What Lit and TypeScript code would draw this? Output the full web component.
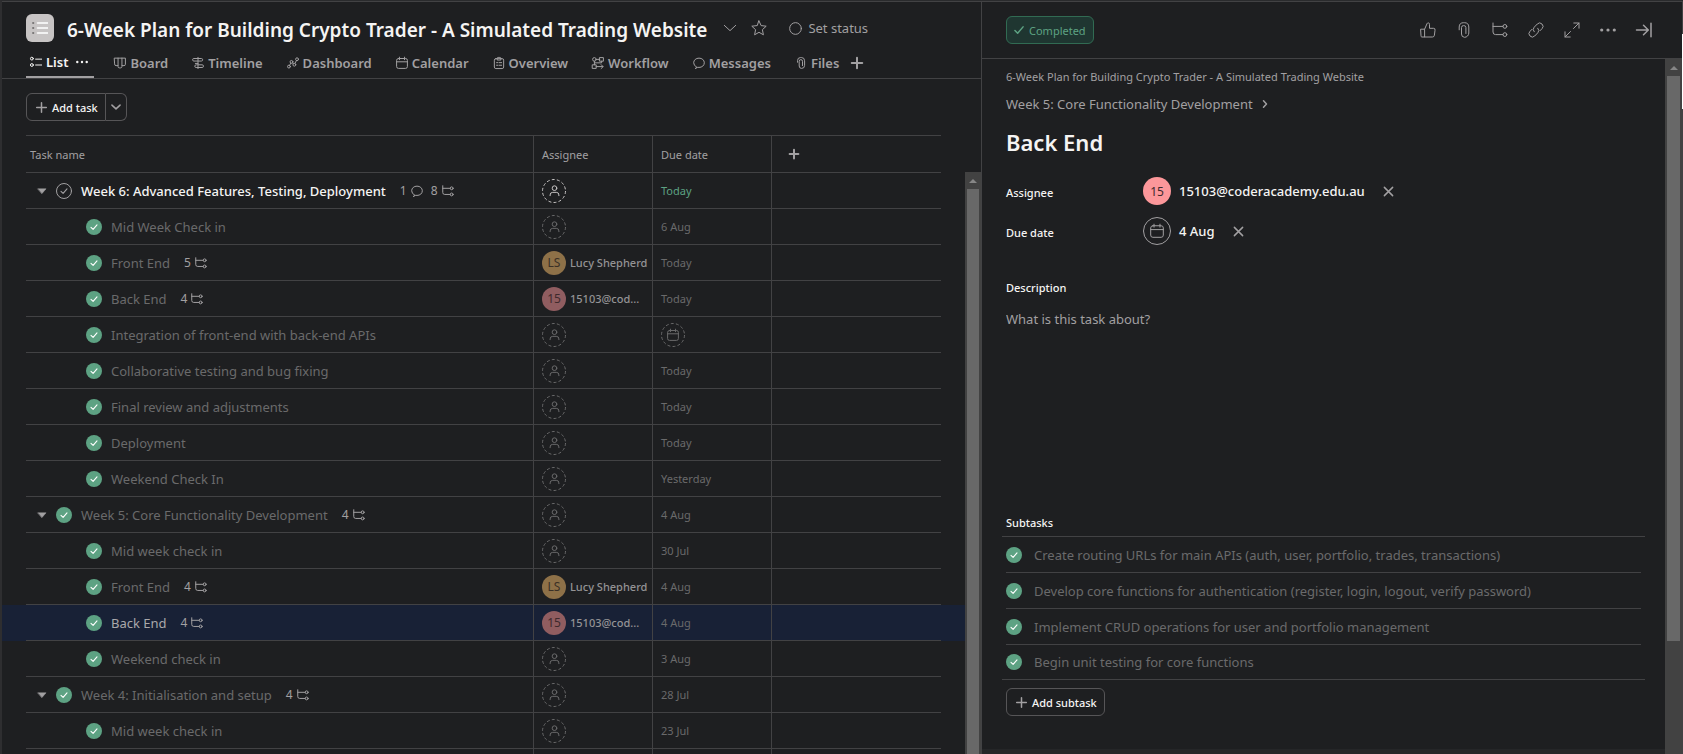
import { LitElement, html, svg, css, nothing, TemplateResult } from "lit";
import { customElement, property } from "lit/decorators.js";
import { classMap } from "lit/directives/class-map.js";

interface Task {
  name: string;
  parent?: boolean;
  open?: boolean;
  selected?: boolean;
  comments?: number;
  subtasks?: number;
  who?: "ls" | "15";
  due: string;
  today?: boolean;
}

const TASKS: Task[] = [
  { name: "Week 6: Advanced Features, Testing, Deployment", parent: true, open: true, comments: 1, subtasks: 8, due: "Today", today: true },
  { name: "Mid Week Check in", due: "6 Aug" },
  { name: "Front End", subtasks: 5, who: "ls", due: "Today" },
  { name: "Back End", subtasks: 4, who: "15", due: "Today" },
  { name: "Integration of front-end with back-end APIs", due: "" },
  { name: "Collaborative testing and bug fixing", due: "Today" },
  { name: "Final review and adjustments", due: "Today" },
  { name: "Deployment", due: "Today" },
  { name: "Weekend Check In", due: "Yesterday" },
  { name: "Week 5: Core Functionality Development", parent: true, subtasks: 4, due: "4 Aug" },
  { name: "Mid week check in", due: "30 Jul" },
  { name: "Front End", subtasks: 4, who: "ls", due: "4 Aug" },
  { name: "Back End", subtasks: 4, who: "15", due: "4 Aug", selected: true },
  { name: "Weekend check in", due: "3 Aug" },
  { name: "Week 4: Initialisation and setup", parent: true, subtasks: 4, due: "28 Jul" },
  { name: "Mid week check in", due: "23 Jul" },
];

const TABS: [string, string][] = [
  ["list", "List"],
  ["board", "Board"],
  ["timeline", "Timeline"],
  ["dashboard", "Dashboard"],
  ["calendar", "Calendar"],
  ["overview", "Overview"],
  ["workflow", "Workflow"],
  ["bubble", "Messages"],
  ["clip", "Files"],
];

const SUBTASKS = [
  "Create routing URLs for main APIs (auth, user, portfolio, trades, transactions)",
  "Develop core functions for authentication (register, login, logout, verify password)",
  "Implement CRUD operations for user and portfolio management",
  "Begin unit testing for core functions",
];

const ASSIGNEES = {
  ls: { initials: "LS", name: "Lucy Shepherd" },
  "15": { initials: "15", name: "15103@cod..." },
};

/* Glyphs are drawn on a 16-unit grid and stroked with the current colour. */
const GLYPHS: Record<string, TemplateResult> = {
  list: svg`<circle cx="2.5" cy="3.5" r="1.9"/><circle cx="2.5" cy="12" r="1.9"/><path d="M7.5 4.2h8M7.5 12h8"/>`,
  board: svg`<path d="M.8 1.5h14.4v8.2a1.8 1.8 0 0 1-1.8 1.8h-2.8v1.2a1.8 1.8 0 0 1-1.8 1.8H7.2a1.8 1.8 0 0 1-1.8-1.8v-1.2H2.600a1.800 1.800 0 0 1-1.800-1.800zM5.400 1.500v10M10.600 1.500v10"/>`,
  timeline: svg`<path d="M8 .5v15M8 2H2.500a1.700 1.700 0 0 0 0 3.400H12.500a1.500 1.500 0 0 0 0-3.400H8M4.500 8.600H8M8 10.400h5.500a1.800 1.800 0 0 1 0 3.600H5.500a1.800 1.800 0 0 1 0-3.600z"/>`,
  dashboard: svg`<circle cx="2.600" cy="12.800" r="1.900"/><circle cx="6" cy="6.500" r="1.900"/><circle cx="9.800" cy="10.300" r="1.900"/><circle cx="13.400" cy="3" r="1.900"/><path d="M3.500 11l1.600-2.800M7.300 8l1.200 1M10.600 8.500l2-3.700"/>`,
  calendar: svg`<rect x=".8" y="2" width="14.400" height="13.200" rx="2.500"/><path d="M.8 6.400h14.400M4.600 .2v3.400M11.400 .2v3.400"/>`,
  overview: svg`<rect x="1.800" y="2.200" width="12.400" height="13.200" rx="2"/><path d="M5.500 3.500v-1.500a1.400 1.400 0 0 1 1.400-1.400h2.200a1.400 1.400 0 0 1 1.400 1.400v1.500z"/><path d="M4.800 7.500h1.400M8 7.500h3.500M4.800 11h1.400M8 11h3.500"/>`,
  workflow: svg`<circle cx="3.200" cy="3.200" r="2.400"/><rect x="10.400" y=".8" width="4.800" height="4.800"/><rect x=".8" y="10.400" width="4.800" height="4.800"/><path d="M5.600 3.200h4.800M3.200 5.600v4.800M12.800 5.600v2.200H3.200M5.600 12.800h9M12.200 10.200l2.600 2.600-2.600 2.600"/>`,
  bubble: svg`<path d="M4.600 13.300A6.300 6.300 0 0 1 .9 7.700C.9 4.100 4 1.500 8 1.500s7.100 2.600 7.100 6.200S12 13.900 8 13.900c-.6 0-1.100 0-1.600-.2L3.400 15.200z"/>`,
  clip: svg`<path d="M3.400 7V4.800A4.100 4.100 0 0 1 7.500.7h1A4.300 4.300 0 0 1 12.800 5v6.200a4 4 0 0 1-4 4A3.200 3.200 0 0 1 5.600 12V5.700a2.200 2.200 0 0 1 4.400 0v5.800"/>`,
  attach: svg`<path d="M3.200 7.800V5A4.400 4.400 0 0 1 7.600.7h.8A4.400 4.400 0 0 1 12.800 5v6a4.300 4.300 0 0 1-4.300 4.300A3.300 3.300 0 0 1 5.500 12V5.600a2 2 0 0 1 2-2h.4a2 2 0 0 1 2 2V11.500"/>`,
  subtask: svg`<path d="M1 1v9a2.600 2.600 0 0 0 2.600 2.600h7.200M1 4.400h9.800"/><circle cx="12.900" cy="4.400" r="1.900"/><circle cx="12.900" cy="12.600" r="1.900"/>`,
  like: svg`<path d="M1 7.200h3.600v7.800H1.800a.8.8 0 0 1-.8-.8zM4.600 7.200L7 1.700a1.300 1.300 0 0 1 2.500.6v4h4a1.600 1.600 0 0 1 1.500 2l-.6 4.900a2 2 0 0 1-2 1.800H4.600"/>`,
  link: svg`<path d="M6.200 9.800a3.300 3.300 0 0 1 0-4.600l3.100-3.200a3.300 3.300 0 0 1 4.700 4.700l-2 2M9.800 6.200a3.300 3.300 0 0 1 0 4.600l-3.100 3.200A3.300 3.300 0 0 1 2 9.300l2-2"/>`,
  expand: svg`<path d="M9.500 6.500L15 1M9.800 1H15v5.200M6.500 9.500L1 15M6.200 15H1V9.800"/>`,
  collapse: svg`<path d="M.5 8h11.500M7.500 3.200L12.300 8l-4.800 4.800M15 1.200v13.600"/>`,
  star: svg`<path d="M8 .9l2.100 4.700 5.100.6-3.800 3.500 1 5.100L8 12.300l-4.400 2.500 1-5.100L.8 6.200l5.100-.6z"/>`,
  down: svg`<path d="M1.500 5l6.500 6 6.500-6"/>`,
  right: svg`<path d="M5 1.500L11 8l-6 6.500"/>`,
  plus: svg`<path d="M8 1v14M1 8h14"/>`,
  close: svg`<path d="M2 2l12 12M14 2L2 14"/>`,
  ring: svg`<circle cx="8" cy="8" r="7.200"/>`,
  tick: svg`<path d="M1.500 8.800l4.300 4.400L14.500 3"/>`,
  person: svg`<circle cx="8" cy="4.600" r="3.400"/><path d="M1.600 15.500v-1a3.800 3.800 0 0 1 3.800-3.800h5.200a3.800 3.800 0 0 1 3.800 3.800v1"/>`,
  dots: svg`<g fill="currentColor" stroke="none"><circle cx="1.700" cy="8" r="1.600"/><circle cx="8" cy="8" r="1.600"/><circle cx="14.300" cy="8" r="1.600"/></g>`,
  caret: svg`<path d="M1.500 4.500h13L8 12z" fill="currentColor" stroke="currentColor"/>`,
};

@customElement("ui-icon")
class UiIcon extends LitElement {
  @property() name = "plus";
  @property({ type: Number }) size = 12;
  @property({ type: Number }) weight = 1;

  static styles = css`
    :host { display: inline-flex; flex: none; }
    svg { display: block; fill: none; stroke: currentColor; stroke-linecap: round; stroke-linejoin: round; overflow: visible; }
  `;

  render() {
    return html`<svg width=${this.size} height=${this.size} viewBox="0 0 16 16"
      stroke-width=${(this.weight * 16) / this.size} aria-hidden="true">${GLYPHS[this.name]}</svg>`;
  }
}

@customElement("check-mark")
class CheckMark extends LitElement {
  @property({ type: Boolean }) open = false;
  @property() label = "";

  static styles = css`
    :host { display: inline-flex; flex: none; }
    button { display: block; padding: 0; border: 0; background: none; color: #a2a0a2; }
    svg { display: block; }
  `;

  render() {
    return html`<button aria-label=${`Completion of ${this.label}`} aria-pressed=${!this.open}>
      <svg width="16" height="16" viewBox="0 0 16 16" fill="none" stroke-linecap="round" stroke-linejoin="round">
        <circle cx="8" cy="8" r=${this.open ? 7.5 : 8} fill=${this.open ? "none" : "#5da283"} stroke=${this.open ? "currentColor" : "none"} />
        <path d="M5 8.400l2.100 2 3.900-4.500" stroke=${this.open ? "currentColor" : "#ffffff"} stroke-width="1.100" />
      </svg>
    </button>`;
  }
}

@customElement("empty-slot")
class EmptySlot extends LitElement {
  @property() icon = "person";
  @property() label = "";

  static styles = css`
    :host { display: flex; flex: none; }
    button { display: grid; place-items: center; width: 24px; height: 24px; padding: 0; border: 0; background: none; color: inherit; }
    .ring, ui-icon { grid-area: 1 / 1; }
    .ring { display: block; fill: none; stroke: currentColor; }
  `;

  render() {
    return html`<button aria-label=${this.label}>
      <svg class="ring" width="24" height="24" viewBox="0 0 24 24"><circle cx="12" cy="12" r="11.500" stroke-dasharray="3 2.160" /></svg>
      <ui-icon name=${this.icon} size=${this.icon === "person" ? 11 : 12}></ui-icon>
    </button>`;
  }
}

@customElement("scroll-rail")
class ScrollRail extends LitElement {
  @property() extent = "full";

  static styles = css`
    :host { display: flex; flex-direction: column; background: #424242; box-sizing: border-box; padding: 0 2px; }
    .arrow { height: 17px; display: grid; place-items: center; flex: none; }
    .arrow svg { display: block; fill: #868686; }
    .thumb { background: #686868; flex: 1; }
    .rest { flex: 0; }
    .part .thumb { flex: 5; }
    .part .rest { flex: 1; }
    .track { flex: 1; display: flex; flex-direction: column; }
  `;

  render() {
    return html`
      <div class="arrow"><svg width="8" height="4" viewBox="0 0 8 4"><path d="M4 0l4 4H0z" /></svg></div>
      <div class="track ${this.extent}"><div class="thumb"></div><div class="rest"></div></div>
    `;
  }
}

const shared = css`
  * { box-sizing: border-box; }
  button { font: inherit; color: inherit; background: none; border: 0; padding: 0; margin: 0; display: inline-flex; align-items: center; }
  h1, h2, h3, p, ul, dl, dd { margin: 0; padding: 0; }
  ul { list-style: none; }
  a { color: inherit; text-decoration: none; }
  .outlined { height: 28px; border: 1px solid #565557; border-radius: 6px; color: #f5f4f3; font-size: 11px; font-weight: 500; }
  .outlined ui-icon { color: #a2a0a2; }
`;

@customElement("project-list")
class ProjectList extends LitElement {
  static styles = [
    shared,
    css`
      :host { display: flex; flex-direction: column; min-width: 0; overflow: hidden; }
      .title { display: flex; align-items: center; height: 28px; margin: 12px 24px 0; color: #a2a0a2; }
      .badge { width: 28px; height: 28px; border-radius: 6px; background: #c7c4c4; display: grid; place-items: center; flex: none; }
      .badge svg { display: block; }
      h1 { margin-left: 13px; padding-top: 3px; font-size: 19px; line-height: 28px; font-weight: 600; color: #f5f4f3; white-space: nowrap; }
      .title .chev { margin-left: 16px; }
      .title .star { margin-left: 14px; }
      .status { margin-left: 22px; gap: 6px; font-size: 13px; white-space: nowrap; }
      nav { display: flex; align-items: stretch; gap: 24px; height: 37px; padding: 0 24px; border-bottom: 1px solid #424244; color: #a2a0a2; font-size: 13px; font-weight: 600; }
      nav a { display: flex; align-items: center; gap: 4px; padding-top: 6px; white-space: nowrap; }
      .current { color: #f5f4f3; padding: 6px 6px 0 4px; margin-right: -4px; border-bottom: 2px solid #a2a0a2; }
      .current .more { margin-left: 4px; }
      .add-tab { padding-top: 6px; margin-left: -12px; }
      .toolbar { display: flex; padding: 14px 24px; }
      .toolbar .add { padding: 0 7px 0 9px; gap: 5px; border-radius: 6px 0 0 6px; }
      .toolbar .drop { padding: 0 5px; border-left: 0; border-radius: 0 6px 6px 0; }
      .body { flex: 1; min-height: 0; display: flex; }
      .grid { flex: 1; min-width: 0; overflow: hidden; }
      scroll-rail { width: 16px; margin-top: 37px; }
      table { width: 100%; table-layout: fixed; border-collapse: separate; border-spacing: 0; font-size: 11px; color: #6a6a6b; }
      .edge { width: 24px; border: 0; }
      .c-person, .c-date { width: 119px; }
      .c-add { width: 170px; }
      th, td { padding: 0; text-align: left; font-weight: 400; border-bottom: 1px solid #424244; height: 36px; white-space: nowrap; }
      th { height: 38px; border-top: 1px solid #424244; color: #a2a0a2; }
      .split { border-left: 1px solid #424244; padding-left: 8px; }
      th.split.plus { padding-left: 17px; }
      th:nth-child(2) { padding-left: 4px; }
      .name { display: flex; align-items: center; gap: 9px; padding-left: 60px; font-size: 13px; }
      .name.parent { padding-left: 11px; }
      .name.parent button.twist { color: #a2a0a2; }
      .counts { display: flex; align-items: center; gap: 8px; margin-left: 5px; color: #a2a0a2; font-size: 12px; }
      .count { display: flex; align-items: center; gap: 4px; }
      .open .name { color: #f5f4f3; font-weight: 500; }
      .open .counts { font-weight: 400; }
      .open .slot { color: #c7c4c4; }
      .today { color: #5da283; }
      .selected td, .selected .edge { background: #182136; }
      .selected .name { color: #a9a8ab; }
      .person { display: flex; align-items: center; gap: 4px; color: #949395; font-weight: 500; }
      .face { width: 24px; height: 24px; border-radius: 50%; display: grid; place-items: center; flex: none; font-size: 12px; font-weight: 400; color: #3a3026; }
      .face.ls { background: #8e7148; }
      .face.n15 { background: #905d60; color: #3f2a2d; }
    `,
  ];

  row(t: Task) {
    const who = t.who && ASSIGNEES[t.who];
    return html`<tr class=${classMap({ open: !!t.open, selected: !!t.selected })}>
      <td class="edge"></td>
      <td>
        <div class=${classMap({ name: true, parent: !!t.parent })}>
          ${t.parent ? html`<button class="twist" aria-label="Toggle subtasks"><ui-icon name="caret" size="10" weight="0.5"></ui-icon></button>` : nothing}
          <check-mark ?open=${!!t.open} label=${t.name}></check-mark>
          <span>${t.name}</span>
          ${t.subtasks
            ? html`<div class="counts">
                ${t.comments ? html`<span class="count">${t.comments}<ui-icon name="bubble"></ui-icon></span>` : nothing}
                <span class="count">${t.subtasks}<ui-icon name="subtask"></ui-icon></span>
              </div>`
            : nothing}
        </div>
      </td>
      <td class="split slot">
        ${who
          ? html`<div class="person"><span class="face ${t.who === "ls" ? "ls" : "n15"}">${who.initials}</span><span>${who.name}</span></div>`
          : html`<empty-slot label="Assign task"></empty-slot>`}
      </td>
      <td class="split">${t.due ? html`<span class=${t.today ? "today" : ""}>${t.due}</span>` : html`<empty-slot icon="calendar" label="Set due date"></empty-slot>`}</td>
      <td class="split"></td>
      <td class="edge"></td>
    </tr>`;
  }

  render() {
    return html`
      <div class="title">
        <span class="badge"><svg width="16" height="14" viewBox="0 0 16 14" fill="none" stroke-linecap="round">
          <path d="M5.500 2h10M5.500 7h10M5.500 12h10" stroke="#fff" stroke-width="1.600" />
          <path d="M.8 2h.8M.8 7h.8M.8 12h.8" stroke="#5f5d5d" stroke-width="1.400" />
        </svg></span>
        <h1>6-Week Plan for Building Crypto Trader - A Simulated Trading Website</h1>
        <button class="chev" aria-label="Project actions"><ui-icon name="down" size="14"></ui-icon></button>
        <button class="star" aria-label="Add to starred"><ui-icon name="star" size="16"></ui-icon></button>
        <button class="status"><ui-icon name="ring" size="13"></ui-icon>Set status</button>
      </div>
      <nav>
        ${TABS.map(
          ([icon, label], i) => html`<a href="#${label.toLowerCase()}" class=${i === 0 ? "current" : ""}>
            <ui-icon name=${icon}></ui-icon>${label}${i === 0 ? html`<ui-icon class="more" name="dots"></ui-icon>` : nothing}
          </a>`
        )}
        <button class="add-tab" aria-label="Add tab"><ui-icon name="plus" size="12" weight="2"></ui-icon></button>
      </nav>
      <div class="toolbar">
        <button class="outlined add"><ui-icon name="plus" size="11" weight="1.5"></ui-icon>Add task</button>
        <button class="outlined drop" aria-label="More add options"><ui-icon name="down" size="10" weight="1.5"></ui-icon></button>
      </div>
      <div class="body">
        <div class="grid">
          <table>
            <colgroup><col class="edge" /><col /><col class="c-person" /><col class="c-date" /><col class="c-add" /><col class="edge" /></colgroup>
            <thead>
              <tr>
                <td class="edge"></td>
                <th scope="col">Task name</th>
                <th scope="col" class="split">Assignee</th>
                <th scope="col" class="split">Due date</th>
                <th scope="col" class="split plus"><button aria-label="Add field"><ui-icon name="plus" size="10" weight="2"></ui-icon></button></th>
                <td class="edge"></td>
              </tr>
            </thead>
            <tbody>
              ${TASKS.map((t) => this.row(t))}
              <tr><td class="edge"></td><td></td><td class="split"></td><td class="split"></td><td class="split"></td><td class="edge"></td></tr>
            </tbody>
          </table>
        </div>
        <scroll-rail></scroll-rail>
      </div>
    `;
  }
}

@customElement("task-pane")
class TaskPane extends LitElement {
  static styles = [
    shared,
    css`
      :host { display: flex; flex-direction: column; min-width: 0; border-left: 1px solid #424244; color: #f5f4f3; }
      header { display: flex; align-items: center; justify-content: space-between; height: 57px; flex: none; padding: 0 30px 0 24px; border-bottom: 1px solid #424244; color: #a2a0a2; }
      .done { height: 28px; gap: 5px; padding: 0 7px; border: 1px solid #316b53; border-radius: 6px; background: #1f3631; color: #5da283; font-size: 11px; }
      .tools { display: flex; gap: 20px; }
      .main { flex: 1; min-height: 0; display: flex; }
      .scroll { flex: 1; min-width: 0; display: flex; flex-direction: column; overflow: hidden; }
      .content { flex: 1; padding: 8px 20px 0; }
      .inset { padding: 0 4px; }
      .project { display: block; font-size: 11px; line-height: 20px; color: #a2a0a2; }
      .crumb { display: flex; align-items: center; gap: 8px; margin-top: 7px; font-size: 13px; line-height: 20px; color: #a2a0a2; }
      h2 { margin-top: 12px; font-size: 22px; line-height: 32px; font-weight: 600; }
      dl { display: grid; grid-template-columns: 137px 1fr; row-gap: 12px; margin-top: 19px; align-items: center; }
      dt { font-size: 11px; font-weight: 500; padding-top: 2px; }
      dd { display: flex; align-items: center; gap: 8px; height: 28px; font-size: 13px; font-weight: 500; }
      dd button.x { margin-left: 10px; color: #a2a0a2; }
      .face { width: 28px; height: 28px; border-radius: 50%; display: grid; place-items: center; background: #fc979a; color: #3f2a2d; font-size: 12px; font-weight: 400; }
      .cal { width: 28px; height: 28px; border-radius: 50%; border: 1px solid #a2a0a2; justify-content: center; color: #a2a0a2; }
      label { display: block; margin-top: 33px; font-size: 11px; line-height: 20px; font-weight: 500; }
      textarea { display: block; width: 100%; height: 204px; margin-top: 11px; padding: 0; border: 0; outline: 0; resize: none; background: none; font: inherit; font-size: 13px; line-height: 20px; }
      textarea::placeholder { color: #a2a0a2; opacity: 1; }
      h3 { font-size: 11px; line-height: 20px; font-weight: 500; }
      ul { margin-top: 3px; border: 1px solid #424244; border-width: 1px 0; padding: 0 4px; color: #6a6a6b; font-size: 13px; }
      li { display: flex; align-items: center; gap: 12px; height: 36px; border-bottom: 1px solid #424244; white-space: nowrap; }
      li:last-child { border-bottom: 0; height: 34px; }
      .sub { margin-top: 8px; padding: 0 7px 0 9px; gap: 5px; }
      .foot { height: 5px; background: #252628; flex: none; }
      scroll-rail { width: 17px; }
    `,
  ];

  render() {
    const tools: [string, string][] = [
      ["like", "Like"], ["attach", "Attach"], ["subtask", "Subtasks"], ["link", "Copy link"],
      ["expand", "Full screen"], ["dots", "More"], ["collapse", "Close details"],
    ];
    return html`
      <header>
        <button class="done"><ui-icon name="tick" size="10" weight="1.5"></ui-icon>Completed</button>
        <div class="tools">
          ${tools.map(([n, l]) => html`<button aria-label=${l}><ui-icon name=${n} size="16" weight=${n === "collapse" ? 1.5 : 1}></ui-icon></button>`)}
        </div>
      </header>
      <div class="main">
        <div class="scroll">
          <div class="content">
            <div class="inset">
              <a class="project" href="#project">6-Week Plan for Building Crypto Trader - A Simulated Trading Website</a>
              <a class="crumb" href="#parent">Week 5: Core Functionality Development<ui-icon name="right" size="8" weight="1.5"></ui-icon></a>
              <h2>Back End</h2>
              <dl>
                <dt>Assignee</dt>
                <dd><span class="face">15</span>15103@coderacademy.edu.au<button class="x" aria-label="Remove assignee"><ui-icon name="close" size="11" weight="1.5"></ui-icon></button></dd>
                <dt>Due date</dt>
                <dd><button class="cal" aria-label="Change due date"><ui-icon name="calendar" size="14"></ui-icon></button>4 Aug<button class="x" aria-label="Clear due date"><ui-icon name="close" size="11" weight="1.5"></ui-icon></button></dd>
              </dl>
              <label for="description">Description</label>
              <textarea id="description" placeholder="What is this task about?"></textarea>
              <h3>Subtasks</h3>
            </div>
            <ul>
              ${SUBTASKS.map((s) => html`<li><check-mark label=${s}></check-mark><span>${s}</span></li>`)}
            </ul>
            <div class="inset"><button class="outlined sub"><ui-icon name="plus" size="11" weight="1.5"></ui-icon>Add subtask</button></div>
          </div>
          <div class="foot"></div>
        </div>
        <scroll-rail extent="part"></scroll-rail>
      </div>
    `;
  }
}

@customElement("app-root")
class AppRoot extends LitElement {
  static styles = css`
    :host { display: block; font-family: "Noto Sans", "Open Sans", sans-serif; font-size: 13px; }
    .shell { display: flex; height: 100vh; box-sizing: border-box; background: #1e1f21; border-left: 2px solid #2e2e30; border-top: 1px solid #2a2b2d; overflow: hidden; }
    .panes { flex: 1; min-width: 0; display: flex; border-top: 1px solid #424244; }
    project-list { flex: 1; }
    task-pane { flex: 0 1 700px; }
    .outer { width: 1px; display: flex; flex-direction: column; background: #424244; }
    .glint { height: 10%; margin-top: 33px; background: #ffffff; }
  `;

  render() {
    return html`<div class="shell">
      <div class="panes"><project-list></project-list><task-pane></task-pane></div>
      <div class="outer"><div class="glint"></div></div>
    </div>`;
  }
}
